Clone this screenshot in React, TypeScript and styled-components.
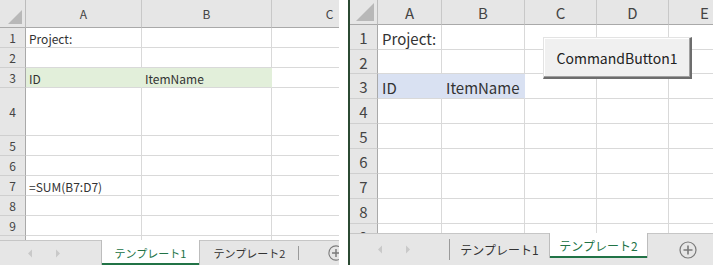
import React from "react";
import styled, { createGlobalStyle } from "styled-components";

const Global = createGlobalStyle`
  html, body { margin: 0; padding: 0; background: #ffffff; }
  body { font-family: "Noto Sans CJK JP", "Noto Sans", sans-serif; }
`;

const Page = styled.div`
  display: flex;
  width: 713px;
  height: 265px;
  overflow: hidden;
  background: #ffffff;
`;

const Gap = styled.div`
  width: 9px;
  flex: none;
  background: #ffffff;
`;

const Panel = styled.div<{ $w: number; $edge?: boolean }>`
  position: relative;
  width: ${(p) => p.$w}px;
  flex: none;
  display: flex;
  flex-direction: column;
  overflow: hidden;
  border-left: ${(p) => (p.$edge ? "2px solid #2b4a33" : "none")};
  box-sizing: border-box;
`;

const GridArea = styled.div<{ $h: number }>`
  height: ${(p) => p.$h}px;
  flex: none;
  overflow: hidden;
`;

const Grid = styled.div<{ $cols: string; $rows: string }>`
  display: grid;
  grid-template-columns: ${(p) => p.$cols};
  grid-template-rows: ${(p) => p.$rows};
  width: max-content;
`;

const Corner = styled.div`
  background: #e6e6e6;
  border-right: 1px solid #bcbcbc;
  border-bottom: 1px solid #a9a9a9;
  box-sizing: border-box;
  position: relative;
`;

const CornerTri = styled.svg`
  position: absolute;
  right: 3px;
  bottom: 3px;
`;

const ColHead = styled.div<{ $fs: number }>`
  background: #e6e6e6;
  border-right: 1px solid #c8c8c8;
  border-bottom: 1px solid #a9a9a9;
  box-sizing: border-box;
  display: flex;
  align-items: center;
  justify-content: center;
  font-size: ${(p) => p.$fs}px;
  color: #444;
`;

const RowHead = styled.div<{ $fs: number }>`
  background: #e6e6e6;
  border-right: 1px solid #a9a9a9;
  border-bottom: 1px solid #cfcfcf;
  box-sizing: border-box;
  display: flex;
  align-items: center;
  justify-content: center;
  padding-top: 2px;
  font-size: ${(p) => p.$fs}px;
  color: #444;
  line-height: 1.2;
`;

const Cell = styled.div<{ $fs: number; $bg?: string; $pad: number }>`
  background: ${(p) => p.$bg || "#ffffff"};
  border-right: 1px solid ${(p) => (p.$bg ? p.$bg : "#d9d9d9")};
  border-bottom: 1px solid #d9d9d9;
  box-sizing: border-box;
  display: flex;
  align-items: flex-end;
  padding: 0 0 1px ${(p) => p.$pad}px;
  font-size: ${(p) => p.$fs}px;
  color: #333;
  white-space: nowrap;
  line-height: 1.2;
`;

const TabBar = styled.div<{ $h: number }>`
  height: ${(p) => p.$h}px;
  flex: none;
  display: flex;
  background: #e6e6e6;
  border-top: 1px solid #c6c6c6;
  box-sizing: border-box;
`;

const Nav = styled.div<{ $w: number }>`
  width: ${(p) => p.$w}px;
  flex: none;
  display: flex;
  align-items: center;
  gap: 22px;
  padding-left: 27px;
  box-sizing: border-box;
  position: relative;
`;

const NavSep = styled.div`
  position: absolute;
  right: 0;
  top: 5px;
  bottom: 5px;
  width: 1px;
  background: #9a9a9a;
`;

const Tab = styled.div<{ $active?: boolean; $fs: number; $w: number; $sep?: boolean; $lineBottom: number }>`
  width: ${(p) => p.$w}px;
  flex: none;
  box-sizing: border-box;
  display: flex;
  align-items: center;
  justify-content: center;
  font-size: ${(p) => p.$fs}px;
  white-space: nowrap;
  color: ${(p) => (p.$active ? "#217346" : "#333")};
  background: ${(p) => (p.$active ? "#ffffff" : "transparent")};
  position: relative;
  margin-top: -1px;
  border-left: ${(p) => (p.$active ? "1px solid #bdbdbd" : "none")};
  border-right: ${(p) => (p.$active ? "1px solid #bdbdbd" : "none")};
  margin-bottom: ${(p) => (p.$active ? p.$lineBottom : 0)}px;
  &::after {
    content: "";
    position: absolute;
    left: ${(p) => (p.$active ? "0" : "auto")};
    right: 0;
    bottom: ${(p) => (p.$active ? "0" : "5px")};
    top: ${(p) => (p.$active ? "auto" : "6px")};
    width: ${(p) => (p.$active ? "auto" : p.$sep ? "1px" : "0")};
    height: ${(p) => (p.$active ? "2px" : "auto")};
    background: ${(p) => (p.$active ? "#217346" : "#9a9a9a")};
  }
`;

const AddArea = styled.div<{ $pl: number }>`
  flex: 1;
  display: flex;
  align-items: center;
  padding-left: ${(p) => p.$pl}px;
`;

const CmdButton = styled.div`
  position: absolute;
  left: 193px;
  top: 37px;
  width: 149px;
  height: 42px;
  box-sizing: border-box;
  background: #f0f0f0;
  border-top: 1px solid #e3e3e3;
  border-left: 1px solid #e3e3e3;
  border-right: 2px solid #6d6d6d;
  border-bottom: 2px solid #6d6d6d;
  box-shadow: inset -1px -1px 0 #a0a0a0, inset 1px 1px 0 #ffffff;
  display: flex;
  align-items: center;
  justify-content: center;
  font-family: "Noto Sans CJK JP", "Noto Sans", sans-serif;
  font-size: 14px;
  color: #222;
`;

const Arrow = ({ dir }: { dir: "l" | "r" }) => (
  <svg width="6" height="9" viewBox="0 0 6 9">
    {dir === "l" ? <path d="M5 0.5 L1 4.5 L5 8.5 Z" fill="#c9c9c9" /> : <path d="M1 0.5 L5 4.5 L1 8.5 Z" fill="#c9c9c9" />}
  </svg>
);

const PlusIcon = ({ size }: { size: number }) => (
  <svg width={size} height={size} viewBox="0 0 18 18">
    <circle cx="9" cy="9" r="8" fill="none" stroke="#7a7a7a" strokeWidth="1.2" />
    <path d="M9 4.5 V13.5 M4.5 9 H13.5" stroke="#7a7a7a" strokeWidth="1.6" />
  </svg>
);

type SheetProps = {
  rowHeadW: number;
  cols: number[];
  headH: number;
  rows: number[];
  labeled: number;
  fs: number;
  pad: number;
  letters: string[];
  data: Record<string, string>;
  hlRow: number;
  hlCols: number;
  hlColor: string;
  gridH: number;
  tabH: number;
  navW: number;
  navSep: boolean;
  tabW: number;
  tabFs: number;
  active: number;
  lineBottom: number;
  addPl: number;
  plusSize: number;
  tri: number;
};

const Sheet = (p: SheetProps) => {
  const colsTpl = [p.rowHeadW, ...p.cols].map((c) => `${c}px`).join(" ");
  const rowsTpl = [p.headH, ...p.rows].map((r) => `${r}px`).join(" ");
  return (
    <>
      <GridArea $h={p.gridH}>
        <Grid $cols={colsTpl} $rows={rowsTpl}>
          <Corner>
            <CornerTri width={p.tri} height={p.tri} viewBox="0 0 10 10">
              <path d="M10 0 L10 10 L0 10 Z" fill="#b8b8b8" />
            </CornerTri>
          </Corner>
          {p.letters.map((l) => (
            <ColHead key={l} $fs={p.fs}>
              {l}
            </ColHead>
          ))}
          {p.rows.map((_, ri) => (
            <React.Fragment key={ri}>
              <RowHead $fs={p.fs}>{ri < p.labeled ? ri + 1 : ""}</RowHead>
              {p.letters.map((l, ci) => (
                <Cell
                  key={l}
                  $fs={p.fs}
                  $pad={p.pad}
                  $bg={ri + 1 === p.hlRow && ci < p.hlCols ? p.hlColor : undefined}
                >
                  {p.data[`${l}${ri + 1}`] || ""}
                </Cell>
              ))}
            </React.Fragment>
          ))}
        </Grid>
      </GridArea>
      <TabBar $h={p.tabH}>
        <Nav $w={p.navW}>
          <Arrow dir="l" />
          <Arrow dir="r" />
          {p.navSep && <NavSep />}
        </Nav>
        {["テンプレート1", "テンプレート2"].map((t, i) => (
          <Tab
            key={t}
            $w={p.tabW}
            $fs={p.tabFs}
            $active={i === p.active}
            $sep={i === 1}
            $lineBottom={p.lineBottom}
          >
            {t}
          </Tab>
        ))}
        <AddArea $pl={p.addPl}>
          <PlusIcon size={p.plusSize} />
        </AddArea>
      </TabBar>
    </>
  );
};

export default function App() {
  return (
    <Page>
      <Global />
      <Panel $w={339}>
        <Sheet
          rowHeadW={26}
          cols={[116, 130, 116]}
          headH={28}
          rows={[20, 20, 20, 48, 20, 20, 20, 20, 20, 20]}
          labeled={9}
          fs={12}
          pad={3}
          letters={["A", "B", "C"]}
          data={{ A1: "Project:", A3: "ID", B3: "ItemName", A7: "=SUM(B7:D7)" }}
          hlRow={3}
          hlCols={2}
          hlColor="#e2efda"
          gridH={240}
          tabH={25}
          navW={101}
          navSep={false}
          tabW={99}
          tabFs={11}
          active={0}
          lineBottom={0}
          addPl={29}
          plusSize={16}
          tri={14}
        />
      </Panel>
      <Gap />
      <Panel $w={365} $edge>
        <Sheet
          rowHeadW={28}
          cols={[64, 83, 72, 72, 72]}
          headH={25}
          rows={[25, 24, 25, 25, 25, 25, 25, 25, 25]}
          labeled={9}
          fs={15}
          pad={4}
          letters={["A", "B", "C", "D", "E"]}
          data={{ A1: "Project:", A3: "ID", B3: "ItemName" }}
          hlRow={3}
          hlCols={2}
          hlColor="#d9e1f2"
          gridH={233}
          tabH={32}
          navW={100}
          navSep={true}
          tabW={99}
          tabFs={12}
          active={1}
          lineBottom={7}
          addPl={31}
          plusSize={18}
          tri={18}
        />
        <CmdButton>CommandButton1</CmdButton>
      </Panel>
    </Page>
  );
}
